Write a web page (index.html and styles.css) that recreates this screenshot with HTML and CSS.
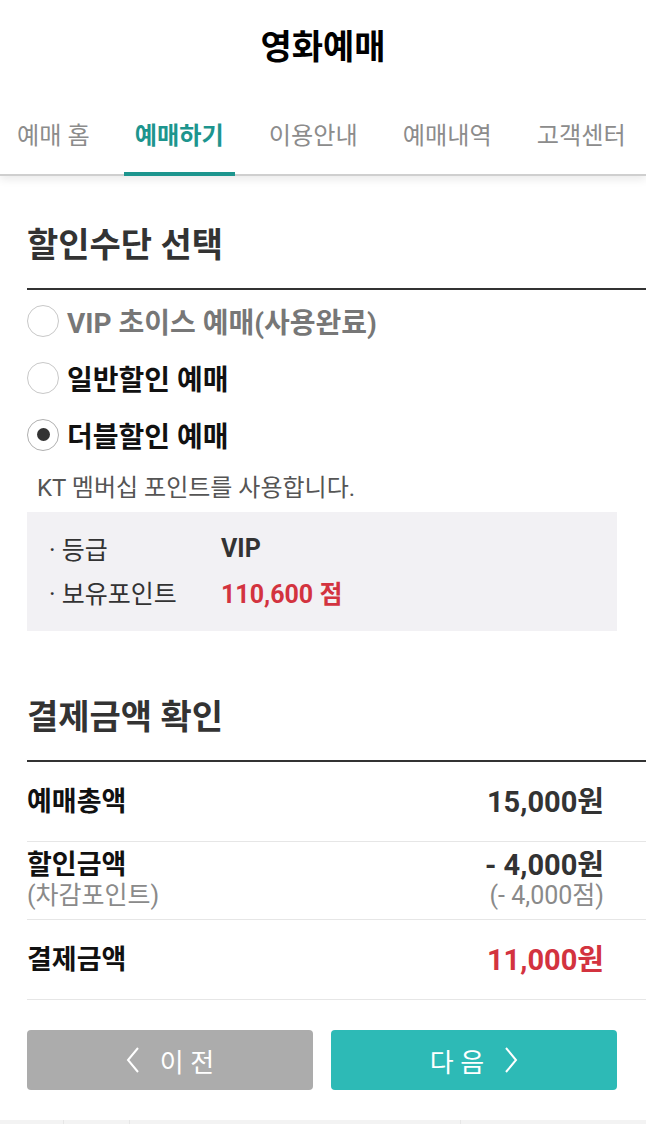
FILE: index.html
```html
<!DOCTYPE html>
<html lang="ko">
<head>
  <meta charset="UTF-8">
  <meta name="viewport" content="width=device-width, initial-scale=1.0">
  <title>영화예매</title>
  <link rel="stylesheet" href="styles.css">
</head>
<body>
  <div id="top-bar">
    <h1 id="page-title">영화예매</h1>
    <div id="tabs">
      <span class="tab">예매 홈</span>
      <span class="tab active">예매하기</span>
      <span class="tab">이용안내</span>
      <span class="tab">예매내역</span>
      <span class="tab">고객센터</span>
    </div>
  </div>

  <div class="section" id="discount-section">
    <h2 class="section-title">할인수단 선택</h2>
    <div class="radio-list">
      <label class="radio-row disabled"><span class="radio"></span>VIP 초이스 예매(사용완료)</label>
      <label class="radio-row"><span class="radio"></span>일반할인 예매</label>
      <label class="radio-row"><span class="radio checked"></span>더블할인 예매</label>
    </div>
    <p id="point-note">KT 멤버십 포인트를 사용합니다.</p>
    <div id="point-box">
      <div class="point-row">
        <span class="point-label">· 등급</span>
        <span class="point-value">VIP</span>
      </div>
      <div class="point-row">
        <span class="point-label">· 보유포인트</span>
        <span class="point-value red">110,600 점</span>
      </div>
    </div>
  </div>

  <div class="section" id="pay-section">
    <h2 class="section-title">결제금액 확인</h2>
    <div class="pay-row">
      <span class="pay-label">예매총액</span>
      <span class="pay-value">15,000원</span>
    </div>
    <div class="pay-row double">
      <div>
        <div class="pay-label">할인금액</div>
        <div class="pay-sub">(차감포인트)</div>
      </div>
      <div class="align-right">
        <div class="pay-value">- 4,000원</div>
        <div class="pay-sub">(- 4,000점)</div>
      </div>
    </div>
    <div class="pay-row">
      <span class="pay-label">결제금액</span>
      <span class="pay-value red">11,000원</span>
    </div>
  </div>

  <div id="buttons">
    <button class="nav-button prev">
      <svg width="14" height="28" viewBox="0 0 14 28"><polyline points="12,2 2,14 12,26" fill="none" stroke="#fff" stroke-width="2"/></svg>
      <span>이 전</span>
    </button>
    <button class="nav-button next">
      <span>다 음</span>
      <svg width="14" height="28" viewBox="0 0 14 28"><polyline points="2,2 12,14 2,26" fill="none" stroke="#fff" stroke-width="2"/></svg>
    </button>
  </div>

  <div id="bottom-strip">
    <span class="strip-cell c1"></span>
    <span class="strip-cell c2"></span>
    <span class="strip-cell c3"></span>
    <span class="strip-cell c4"></span>
  </div>
</body>
</html>
```

FILE: styles.css
```css
body {
  margin: 0;
  font-family: Roboto, "Noto Sans CJK KR", sans-serif;
  background: #fff;
  color: #111;
  overflow: hidden;
}

#top-bar {
  border-bottom: 2px solid #cfcfcf;
  box-shadow: 0 4px 8px rgba(0, 0, 0, 0.08);
}

#page-title {
  margin: 0;
  height: 94px;
  line-height: 94px;
  text-align: center;
  font-size: 34px;
  font-weight: bold;
  color: #000;
}

#tabs {
  display: flex;
  gap: 23px;
  padding-left: 6px;
  height: 80px;
}

.tab {
  padding: 4px 11px 0;
  font-size: 24.2px;
  line-height: 76px;
  color: #8c8c8c;
  white-space: nowrap;
  border-bottom: 4px solid transparent;
  margin-bottom: -2px;
}

.tab.active {
  color: #1d958e;
  font-weight: bold;
  border-bottom-color: #1d958e;
}

.section {
  margin-left: 27px;
}

.section-title {
  margin: 0;
  padding-bottom: 23px;
  line-height: 40px;
  font-size: 34px;
  font-weight: bold;
  color: #333;
  border-bottom: 2px solid #333;
}

#discount-section .section-title {
  margin-top: 49px;
}

.radio-list {
  padding-top: 2px;
}

.radio-row {
  display: flex;
  align-items: center;
  height: 57px;
  font-size: 28px;
  font-weight: bold;
  color: #111;
}

.radio-row.disabled {
  color: #777;
}

.radio {
  width: 32px;
  height: 32px;
  border: 1.5px solid #c8c8c8;
  border-radius: 50%;
  margin: 0 8px 0 0;
  display: flex;
  align-items: center;
  justify-content: center;
  box-sizing: border-box;
}

.radio.checked {
  border-color: #b0b0b0;
}

.radio.checked::after {
  content: "";
  width: 13px;
  height: 13px;
  border-radius: 50%;
  background: #333;
}

#point-note {
  margin: 10px 0 0 10px;
  line-height: 30px;
  font-size: 24px;
  color: #555;
}

#point-box {
  margin: 9px 29px 0 0;
  padding: 14px 0 17px 22px;
  background: #f2f1f4;
}

.point-row {
  display: flex;
  height: 44px;
  align-items: center;
  font-size: 25px;
}

.point-label {
  width: 172px;
  color: #333;
}

.point-value {
  font-weight: bold;
  color: #333;
}

.red {
  color: #d3333f !important;
}

#pay-section .section-title {
  margin-top: 66px;
}

.pay-row {
  display: flex;
  justify-content: space-between;
  align-items: center;
  height: 79px;
  padding-right: 42px;
  border-bottom: 1px solid #e6e6e6;
}

.pay-row.double {
  height: auto;
  padding-top: 8px;
  padding-bottom: 7px;
}

.pay-label {
  font-size: 27px;
  font-weight: bold;
  line-height: 30px;
  color: #111;
}

.pay-value {
  font-size: 29px;
  font-weight: bold;
  line-height: 30px;
  color: #333;
}

.pay-sub {
  font-size: 25px;
  line-height: 32px;
  color: #8a8a8a;
}

.align-right {
  text-align: right;
}

#buttons {
  display: flex;
  gap: 18px;
  margin: 30px 29px 0 27px;
}

.nav-button {
  flex: 1;
  height: 60px;
  border: none;
  border-radius: 4px;
  color: #fff;
  font-family: Roboto, "Noto Sans CJK KR", sans-serif;
  font-size: 26px;
  display: flex;
  align-items: center;
  justify-content: center;
  gap: 20px;
}

.nav-button.prev {
  background: #acacac;
}

.nav-button.next {
  background: #2dbab6;
}

#bottom-strip {
  margin-top: 30px;
  height: 20px;
  background: #f3f3f3;
  display: flex;
}

.strip-cell {
  border-right: 1px solid #e6e6e6;
}

.c1 { width: 63px; }
.c2 { width: 65px; }
.c3 { width: 330px; }
.c4 { width: 120px; border-right: none; }
```
